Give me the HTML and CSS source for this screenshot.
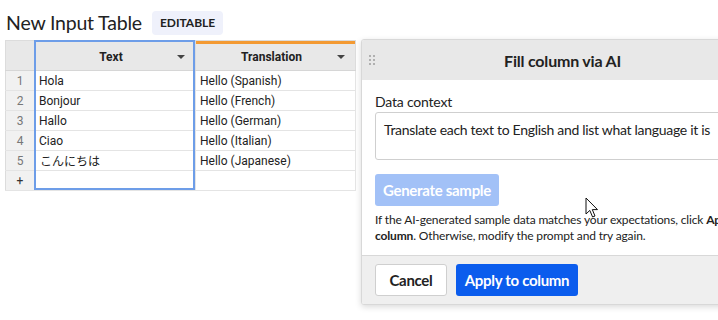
FILE: index.html
```html
<!DOCTYPE html>
<html lang="en">
<head>
    <meta charset="UTF-8">
    <meta name="viewport" content="width=device-width, initial-scale=1.0">
    <title>New Input Table</title>
    <link rel="stylesheet" href="styles.css">
</head>
<body>
    <div class="title-bar">
        <h1>New Input Table</h1>
        <span class="badge">EDITABLE</span>
    </div>

    <div class="workspace">
        <div class="grid-wrap">
            <table class="grid">
                <thead>
                    <tr>
                        <th class="rownum"></th>
                        <th class="col-text"><span>Text</span><i class="caret"></i></th>
                        <th class="col-trans"><span>Translation</span><i class="caret"></i></th>
                    </tr>
                </thead>
                <tbody>
                    <tr><td class="rownum">1</td><td>Hola</td><td>Hello (Spanish)</td></tr>
                    <tr><td class="rownum">2</td><td>Bonjour</td><td>Hello (French)</td></tr>
                    <tr><td class="rownum">3</td><td>Hallo</td><td>Hello (German)</td></tr>
                    <tr><td class="rownum">4</td><td>Ciao</td><td>Hello (Italian)</td></tr>
                    <tr><td class="rownum">5</td><td class="jp">こんにちは</td><td>Hello (Japanese)</td></tr>
                    <tr><td class="rownum add">+</td><td></td><td></td></tr>
                </tbody>
            </table>
            <div class="selection"></div>
        </div>

        <aside class="panel">
            <div class="panel-head">
                <span class="handle">
                    <i></i><i></i><i></i><i></i><i></i><i></i>
                </span>
                <h2>Fill column via AI</h2>
            </div>
            <div class="panel-body">
                <label for="context">Data context</label>
                <div class="context-box" id="context">Translate each text to English and list what language it is</div>
                <button class="btn btn-sample" disabled>Generate sample</button>
                <p class="hint">If the AI-generated sample data matches your expectations, click <strong>Apply to<br>column</strong>. Otherwise, modify the prompt and try again.</p>
            </div>
            <div class="panel-foot">
                <button class="btn btn-cancel">Cancel</button>
                <button class="btn btn-apply">Apply to column</button>
            </div>
        </aside>
    </div>

    <svg class="cursor" width="14" height="22" viewBox="0 0 14 22">
        <path d="M1 1 L1 17 L4.8 13.4 L7.6 20 L10 19 L7.3 12.6 L12.5 12.6 Z" fill="#fff" stroke="#111" stroke-width="1" stroke-linejoin="round"/>
    </svg>
</body>
</html>
```

FILE: styles.css
```css
body {
    margin: 0;
    width: 718px;
    height: 320px;
    overflow: hidden;
    background: #fff;
    color: #222;
    font-family: Lato, "Noto Sans", sans-serif;
    position: relative;
}
.title-bar {
    display: flex;
    align-items: center;
    gap: 10px;
    height: 33px;
    padding: 6px 0 0 6px;
}
h1 {
    margin: 0;
    font-size: 19.5px;
    font-weight: 400;
    letter-spacing: -0.2px;
    color: #222;
}
.badge {
    display: inline-flex;
    align-items: center;
    height: 24px;
    padding: 0 8px;
    background: #eff1fb;
    border-radius: 4px;
    font-size: 12px;
    font-weight: 700;
    color: #222;
}
.workspace {
    display: flex;
    align-items: flex-start;
    gap: 5px;
    padding-left: 5px;
}
.grid-wrap {
    position: relative;
    margin-top: 1px;
}
.grid {
    border-collapse: collapse;
    table-layout: fixed;
    width: 351px;
    font-family: Roboto, "Noto Sans CJK JP", sans-serif;
    font-size: 12px;
    color: #222;
    border: 1px solid #dcdcdc;
}
.grid th {
    height: 29px;
    background: #e8e8e8;
    font-weight: 700;
    font-size: 12px;
    position: relative;
    padding: 0;
    border-right: 1px solid #dcdcdc;
    border-bottom: 1px solid #d6d6d6;
}
.grid th.rownum {
    width: 28px;
}
.grid th.col-text {
    width: 160px;
}
.grid th.col-trans {
    box-shadow: inset 0 3px 0 #f39a33;
}
.grid th span {
    display: block;
    text-align: center;
    padding-right: 8px;
    padding-top: 2px;
}
.caret {
    position: absolute;
    right: 10px;
    top: 14px;
    border-left: 4px solid transparent;
    border-right: 4px solid transparent;
    border-top: 4px solid #444;
}
.grid td {
    height: 19px;
    padding: 0 0 0 4px;
    border-bottom: 1px solid #e4e4e4;
    border-right: 1px solid #e4e4e4;
    white-space: nowrap;
}
.grid td.rownum {
    padding: 0;
    text-align: center;
    color: #777;
    background: #f1f1f1;
    border-right: 1px solid #dcdcdc;
}
.grid td.add {
    color: #333;
}
.grid td.jp {
    padding-left: 5px;
}
.selection {
    position: absolute;
    left: 29px;
    top: 0;
    width: 157px;
    height: 146px;
    border: 2px solid #6d9de8;
    pointer-events: none;
}
.panel {
    flex-shrink: 0;
    width: 401px;
    border: 1px solid #d8d8d8;
    border-radius: 3px;
    box-shadow: 0 2px 6px rgba(0, 0, 0, 0.15);
    background: #fff;
    overflow: hidden;
}
.panel-head {
    display: flex;
    align-items: center;
    height: 40px;
    background: #e8e8e8;
    padding-left: 7px;
}
.handle {
    display: grid;
    grid-template-columns: 2px 2px;
    gap: 2px 2px;
    width: 6px;
}
.handle i {
    width: 2px;
    height: 2px;
    background: #b0b0b0;
}
.panel-head h2 {
    flex: 1;
    margin: 0;
    padding-right: 13px;
    text-align: center;
    font-size: 16px;
    font-weight: 700;
    letter-spacing: -0.2px;
    color: #222;
}
.panel-body {
    padding: 13px 13px 11px 13px;
    border-bottom: 1px solid #d8d8d8;
}
label {
    display: block;
    font-size: 14px;
    line-height: 18px;
    letter-spacing: -0.2px;
    margin-bottom: 1px;
}
.context-box {
    height: 34px;
    padding: 6px 8px;
    border: 1px solid #cfcfcf;
    border-radius: 3px;
    font-size: 14px;
    line-height: 21px;
    letter-spacing: -0.3px;
    white-space: nowrap;
}
.btn {
    height: 32px;
    border-radius: 3px;
    font-family: inherit;
    font-size: 15px;
    font-weight: 700;
    letter-spacing: -0.3px;
    padding: 0;
    cursor: pointer;
}
.btn-sample {
    display: block;
    width: 124px;
    margin-top: 14px;
    border: none;
    background: #a2c1f7;
    color: #fff;
}
.hint {
    margin: 6px 0 0;
    font-size: 12px;
    line-height: 16px;
    letter-spacing: -0.15px;
    white-space: nowrap;
    color: #222;
}
.panel-foot {
    display: flex;
    gap: 9px;
    padding: 8px 13px;
    background: #efefef;
}
.btn-cancel {
    width: 72px;
    background: #fff;
    border: 1px solid #cfcfcf;
    color: #222;
}
.btn-apply {
    width: 122px;
    border: none;
    background: #0b5ced;
    color: #fff;
}
.cursor {
    position: absolute;
    left: 585px;
    top: 197px;
}
```
